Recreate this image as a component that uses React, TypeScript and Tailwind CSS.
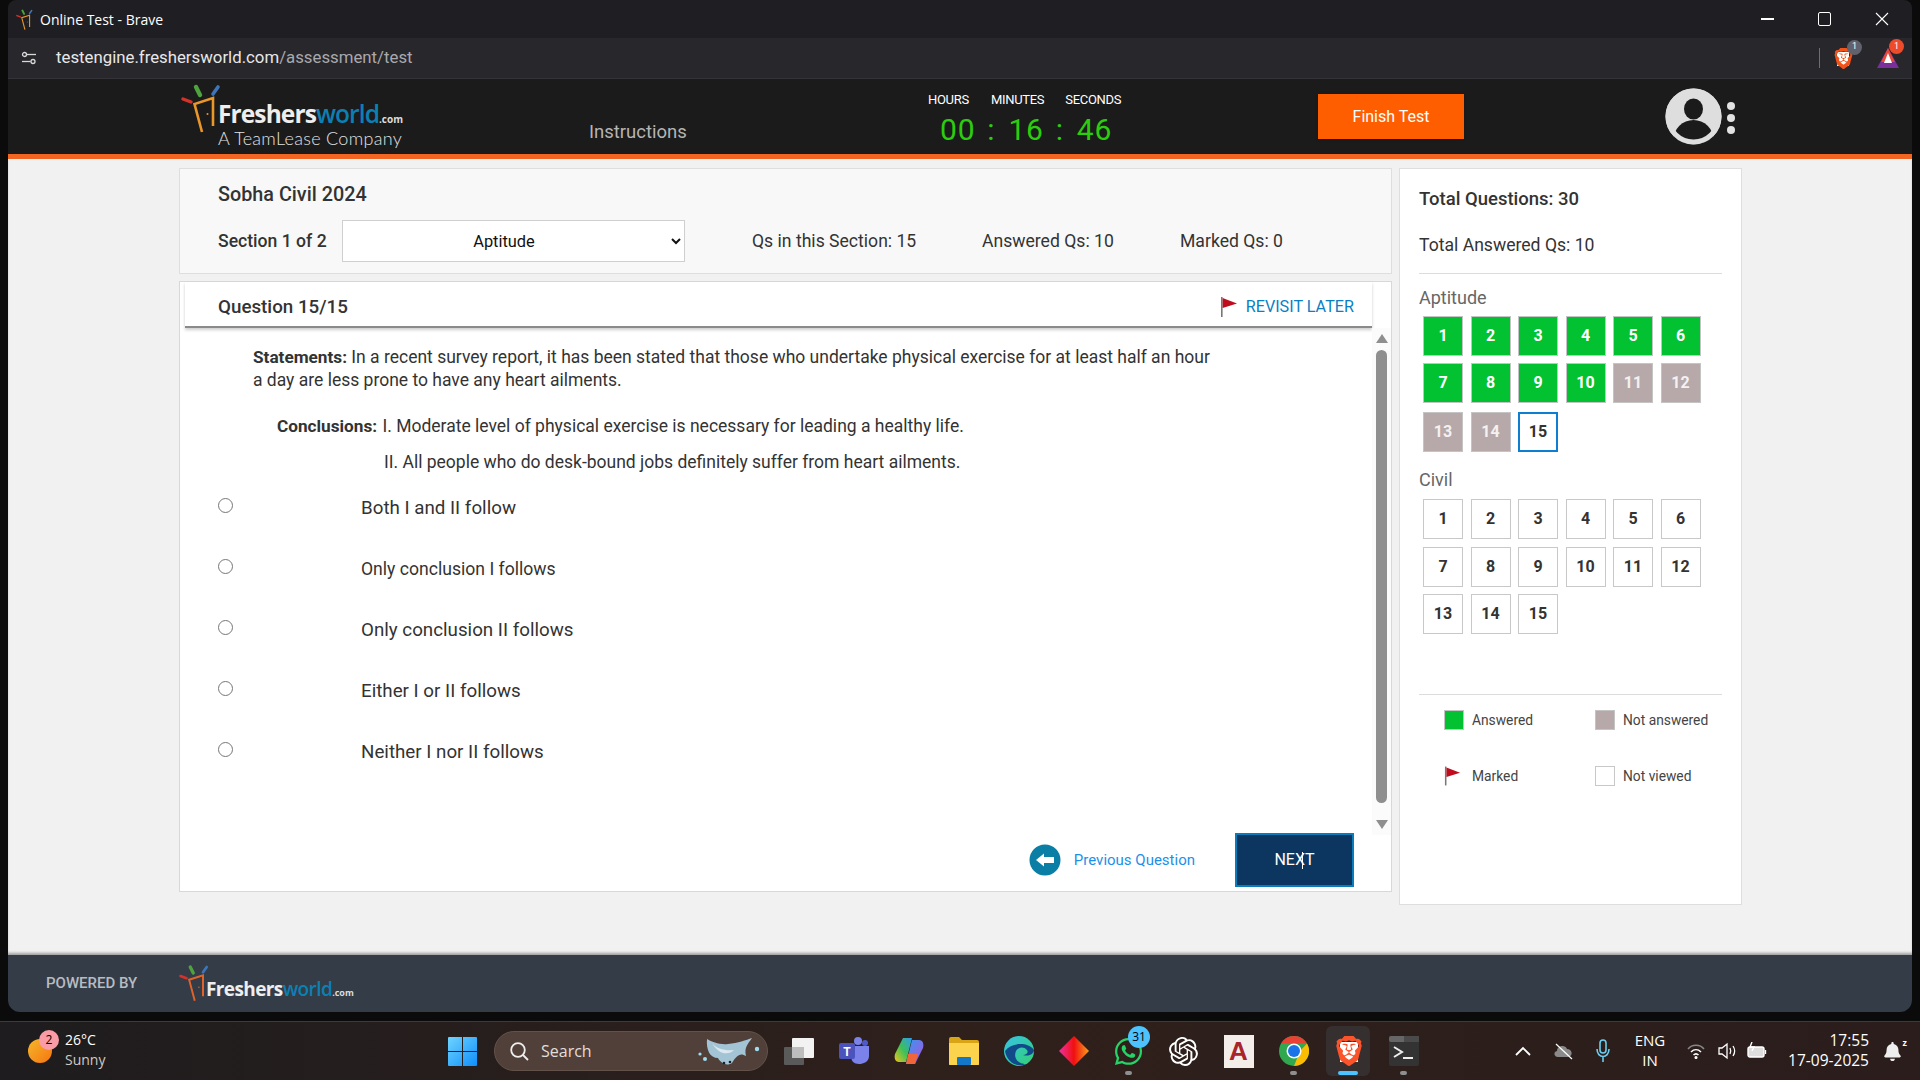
import React from "react";
import { SiOpenai, SiBrave } from "react-icons/si";
import { FaWhatsapp, FaBell } from "react-icons/fa";

const F = { fontFamily: "Roboto, sans-serif" };

function Door({ w = 40, h = 52, door = "#e9962a" }: { w?: number; h?: number; door?: string }) {
  return (
    <svg width={w} height={h} viewBox="10 5 40 52" fill="none">
      <path d="M31 56 L23.5 28 L42 22 L42 50" stroke={door} strokeWidth="2.6" />
      <circle cx="36.5" cy="38" r="1" fill={door} />
      <path d="M12 23 L20 26" stroke="#d5332a" strokeWidth="3.4" strokeLinecap="round" />
      <path d="M25 11 L29 19" stroke="#4fa33f" strokeWidth="4.4" strokeLinecap="round" />
      <path d="M47 11 L42 18" stroke="#3d75b8" strokeWidth="3.6" strokeLinecap="round" />
    </svg>
  );
}

function Flag({ w = 18, h = 20 }: { w?: number; h?: number }) {
  return (
    <svg width={w} height={h} viewBox="0 0 18 20">
      <rect x="1" y="0" width="1.6" height="20" fill="#777" />
      <path d="M2.6 1 L17 6.5 L2.6 11 Z" fill="#c00d1e" />
    </svg>
  );
}

function QBox({ n, kind, shift }: { n: number; kind: "g" | "b" | "w" | "c"; shift?: boolean }) {
  const cls =
    kind === "g"
      ? "bg-[#02c232] text-white border-[#c4c4c4]"
      : kind === "b"
        ? "bg-[#b7a9a9] text-[#f4f1f1] border-[#c4c4c4]"
        : kind === "c"
          ? "bg-white text-[#333] border-[#0e7fd0]"
          : "bg-white text-[#333] border-[#c8c8c8]";
  return (
    <div className={`w-10 h-10 flex items-center justify-center text-[16px] font-bold ${kind === "c" ? "border-2" : "border"} ${cls} ${shift ? "mt-[2px]" : ""}`}>
      {n}
    </div>
  );
}

function Cell({ children, dot, active }: { children: React.ReactNode; dot?: boolean; active?: boolean }) {
  return (
    <div className="relative w-[55px] h-[59px] flex items-center justify-center">
      {active && <div className="absolute left-[5px] top-[4px] w-[44px] h-[50px] rounded-md bg-[#35302f]" />}
      <div className="relative">{children}</div>
      {dot && <div className="absolute left-[24px] top-[49px] w-[7px] h-[4px] rounded-sm bg-[#8f8f8f]" />}
      {active && <div className="absolute left-[17px] top-[49px] w-[20px] h-[4px] rounded-sm bg-[#4cc2ff]" />}
    </div>
  );
}

function Option({ text, size = "text-[18.75px]" }: { text: string; size?: string }) {
  return (
    <div className="flex h-[61px]">
      <input type="radio" name="ans" className="ml-[38px] mt-[2px] w-[15px] h-[15px] accent-[#0a7ea4]" />
      <div className={`ml-[128px] mt-[1px] leading-[23px] text-[#333] ${size}`}>{text}</div>
    </div>
  );
}

export default function App() {
  const apt = Array.from({ length: 15 }, (_, i) => i + 1);
  return (
    <div className="w-[1920px] h-[1080px] overflow-hidden bg-[#0b0b0b] flex flex-col" style={F}>
      <div className="h-[1012px] mx-[8px] rounded-b-xl overflow-hidden flex flex-col">
        {/* title bar */}
        <div className="h-[38px] bg-[#1f1f23] flex items-center rounded-t-lg">
          <div className="ml-[4px] w-[24px] flex justify-center">
            <Door w={17} h={22} />
          </div>
          <div className="ml-[4px] text-[14px] text-white" style={{ fontFamily: '"Open Sans", sans-serif' }}>Online Test - Brave</div>
          <div className="ml-auto flex items-center mr-[23px] gap-[44px] text-white">
            <div className="w-[13px] h-[1.5px] bg-white" />
            <div className="w-[13px] h-[14px] border border-white rounded-[2px]" />
            <svg width="14" height="14" viewBox="0 0 14 14" stroke="white" strokeWidth="1.1"><path d="M1 1 L13 13 M13 1 L1 13" /></svg>
          </div>
        </div>
        {/* address bar */}
        <div className="h-[41px] bg-[#27272c] border-b border-[#333338] flex items-center">
          <svg className="ml-[13px]" width="16" height="14" viewBox="0 0 16 14" fill="none" stroke="#d8d8d8" strokeWidth="1.3">
            <circle cx="3.5" cy="3.5" r="2" /><path d="M6 3.5 H15" /><circle cx="12" cy="10.5" r="2" /><path d="M1 10.5 H9.5" />
          </svg>
          <div className="ml-[19px] text-[16.8px] text-[#e8e8e8]">
            testengine.freshersworld.com<span className="text-[#a9a9ad]">/assessment/test</span>
          </div>
          <div className="ml-auto flex items-center mr-[13px]">
            <div className="w-px h-[20px] bg-[#6e6e72] mr-[13px]" />
            <div className="relative mr-[23px]">
              <div className="absolute left-[4px] top-[4px] w-[12px] h-[14px] bg-white" />
              <SiBrave className="relative" size={21} color="#f0531c" />
              <div className="absolute -right-[8px] -top-[8px] w-[15px] h-[15px] rounded-full bg-[#62626e] text-white text-[9px] flex items-center justify-center">1</div>
            </div>
            <div className="relative">
              <svg width="22" height="20" viewBox="0 0 22 20"><path d="M11 0 L22 20 H0 Z" fill="#7a2f9a" /><path d="M11 0 L18 14 H4 Z" fill="#e8473a" /><path d="M11 5 L15 15 H7 Z" fill="#fff" /></svg>
              <div className="absolute -right-[5px] -top-[9px] w-[15px] h-[15px] rounded-full bg-[#ee4b2b] text-white text-[9px] flex items-center justify-center">1</div>
            </div>
          </div>
        </div>
        {/* site header */}
        <div className="h-[75px] bg-[#1b1b1b] flex shrink-0">
          <div className="w-[173px] shrink-0" />
          <div className="w-[408px] shrink-0 flex">
            <div className="pt-[2px] shrink-0"><Door /></div>
            <div className="ml-[-3px] pt-[21px]">
              <div className="text-[24.5px] leading-[28px] font-bold whitespace-nowrap text-[#eee]" style={{ fontFamily: '"Open Sans", sans-serif', letterSpacing: "-0.9px" }}>
                Freshers<span className="text-[#0d7fb3] font-semibold">world</span>
                <span className="text-[10px] text-[#ddd] tracking-normal">.com</span>
              </div>
              <div className="mt-[-7px] text-[18px] leading-[24px] text-[#e2e2e2] whitespace-nowrap" style={{ fontFamily: "Lato, sans-serif", fontWeight: 300, letterSpacing: "0.3px" }}>A TeamLease Company</div>
            </div>
          </div>
          <div className="w-[339px] shrink-0 pt-[40px] text-[18.5px] leading-[26px] text-[#b5b5b5]">Instructions</div>
          <div className="w-[390px] shrink-0 pt-[13px]">
            <div className="flex text-[13px] leading-[16px] text-white w-[230px]" style={{ letterSpacing: "-0.3px" }}>
              <span>HOURS</span>
              <span className="ml-[22px]">MINUTES</span>
              <span className="ml-[21px]">SECONDS</span>
            </div>
            <div className="mt-[4px] ml-[12px] text-[30px] leading-[35px] text-[#2ccd0e] whitespace-nowrap" style={{ letterSpacing: "0.8px" }}>
              00<span className="ml-[12px]">:</span><span className="ml-[13px]">16</span><span className="ml-[12px]">:</span><span className="ml-[13px]">46</span>
            </div>
          </div>
          <div className="w-[146px] h-[45px] mt-[15px] shrink-0 bg-[#ff5e00] text-white text-[16px] flex items-center justify-center shadow-sm">Finish Test</div>
          <div className="ml-[201px] mt-[9px] shrink-0 flex">
            <svg width="57" height="57" viewBox="0 0 57 57">
              <defs><clipPath id="av"><circle cx="28.5" cy="28.5" r="28" /></clipPath></defs>
              <circle cx="28.5" cy="28.5" r="28" fill="#dedede" />
              <ellipse cx="28.5" cy="21" rx="9.5" ry="10.5" fill="#1b1b1b" />
              <circle cx="28.5" cy="52" r="20" fill="#1b1b1b" stroke="#dedede" strokeWidth="0" clipPath="url(#av)" />
              <circle cx="28.5" cy="28.5" r="25.5" fill="none" stroke="#dedede" strokeWidth="5" />
            </svg>
            <div className="ml-[5px] mt-[14px] flex flex-col gap-[4px]">
              <div className="w-[8px] h-[8px] rounded-full bg-[#e2e2e2]" />
              <div className="w-[8px] h-[8px] rounded-full bg-[#e2e2e2]" />
              <div className="w-[8px] h-[8px] rounded-full bg-[#e2e2e2]" />
            </div>
          </div>
        </div>
        <div className="h-[5px] bg-[#f26522] shrink-0" />
        {/* main */}
        <div className="h-[796px] bg-[#f1f1f1] shrink-0 pl-[171px] pt-[9px] flex gap-[7px] shadow-[inset_0_-3px_3px_-1px_rgba(0,0,0,0.35)]">
          <div className="w-[1213px] flex flex-col gap-[7px]">
            <div className="h-[106px] bg-[#f8f8f8] border border-[#dedede] pl-[38px] pt-[13px]">
              <div className="text-[19.8px] leading-[26px] font-medium text-[#333]">Sobha Civil 2024</div>
              <div className="mt-[12px] flex items-center h-[42px] text-[17.6px] text-[#333]">
                <div className="w-[124px] font-medium">Section 1 of 2</div>
                <select className="w-[343px] h-[42px] bg-white border border-[#cfcfcf] text-[#111] text-[16.4px] text-center pr-[7px]" defaultValue="Aptitude" style={F}>
                  <option>Aptitude</option>
                  <option>Civil</option>
                </select>
                <div className="ml-[67px] w-[230px]">Qs in this Section: 15</div>
                <div className="w-[198px]">Answered Qs: 10</div>
                <div>Marked Qs: 0</div>
              </div>
            </div>
            <div className="h-[611px] bg-white border border-[#d8d8d8] flex flex-col">
              <div className="h-[46px] mx-[5px] flex items-center pt-[6px] pl-[33px] pr-[18px] border-b-2 border-[#8a8a8a] shadow-[0_2px_3px_rgba(0,0,0,0.2)] shrink-0 w-[1187px]">
                <div className="text-[18.8px] font-medium text-[#333]">Question 15/15</div>
                <div className="ml-auto flex items-center gap-[8px] text-[16.2px] text-[#0a7fc4]">
                  <Flag />
                  <span>REVISIT LATER</span>
                </div>
              </div>
              <div className="flex flex-1 min-h-0">
                <div className="w-[1192px] shrink-0 flex flex-col">
                  <div className="pl-[73px] pt-[18px] text-[17.5px] leading-[23px] text-[#333] w-[1038px]">
                    <div><b className="font-bold text-[17.2px]">Statements:</b> In a recent survey report, it has been stated that those who undertake physical exercise for at least half an hour a day are less prone to have any heart ailments.</div>
                    <div className="mt-[23px] pl-[24px]"><b className="font-bold text-[17.2px]">Conclusions:</b> <span className="ml-[1px]">I. Moderate level of physical exercise is necessary for leading a healthy life.</span></div>
                    <div className="mt-[13px] pl-[131px]">II. All people who do desk-bound jobs definitely suffer from heart ailments.</div>
                  </div>
                  <div className="mt-[22px]">
                    <Option text="Both I and II follow" />
                    <Option text="Only conclusion I follows" size="text-[17.6px]" />
                    <Option text="Only conclusion II follows" />
                    <Option text="Either I or II follows" />
                    <Option text="Neither I nor II follows" />
                  </div>
                  <div className="mt-auto mb-[4px] flex items-center justify-end pr-[18px]">
                    <svg width="32" height="32" viewBox="0 0 32 32"><circle cx="16" cy="16" r="15.5" fill="#0a7ea4" /><path d="M7 16 L15 9.5 V13 H25 V19 H15 V22.5 Z" fill="#fff" /></svg>
                    <span className="ml-[13px] text-[15px] text-[#1e90e8]">Previous Question</span>
                    <div className="ml-[40px] w-[119px] h-[54px] bg-[#0c3660] border-2 border-[#0a7cbb] text-white text-[16px] flex items-center justify-center relative">
                      NEXT
                      <div className="absolute left-[65px] top-[17px] w-px h-[17px] bg-white" />
                    </div>
                  </div>
                </div>
                <div className="w-[19px] h-[507px] bg-[#fbfbfb] flex flex-col items-center pt-[6px] shrink-0">
                  <svg width="12" height="9" viewBox="0 0 12 9"><path d="M6 0 L12 9 H0 Z" fill="#8f8f8f" /></svg>
                  <div className="mt-[7px] w-[11px] h-[453px] rounded-full bg-[#8f8f8f]" />
                  <svg className="mt-[17px]" width="12" height="9" viewBox="0 0 12 9"><path d="M0 0 H12 L6 9 Z" fill="#8f8f8f" /></svg>
                </div>
              </div>
            </div>
          </div>
          <div className="w-[343px] h-[737px] bg-white border border-[#dedede] px-[19px] pt-[17px] shrink-0">
            <div className="text-[18.5px] leading-[26px] font-medium text-[#333]">Total Questions: 30</div>
            <div className="mt-[20px] text-[17.6px] leading-[26px] text-[#333]">Total Answered Qs: 10</div>
            <div className="mt-[15px] h-px bg-[#dcdcdc]" />
            <div className="mt-[12px] text-[18px] leading-[24px] text-[#666]">Aptitude</div>
            <div className="mt-[6px] ml-[4px] grid grid-cols-[repeat(6,40px)] gap-x-[7.5px] gap-y-[7px]">
              {apt.map((n) => (
                <QBox key={n} n={n} kind={n <= 10 ? "g" : n < 15 ? "b" : "c"} shift={n > 12} />
              ))}
            </div>
            <div className="mt-[16px] text-[18px] leading-[24px] text-[#666]">Civil</div>
            <div className="mt-[7px] ml-[4px] grid grid-cols-[repeat(6,40px)] gap-x-[7.5px] gap-y-[7.5px]">
              {apt.map((n) => (
                <QBox key={n} n={n} kind="w" />
              ))}
            </div>
            <div className="mt-[60px] h-px bg-[#dcdcdc]" />
            <div className="mt-[15px] ml-[25px] grid grid-cols-[151px_1fr] gap-y-[36px] text-[13.8px] leading-[20px] text-[#444]">
              <div className="flex items-center gap-[8px]"><div className="w-5 h-5 bg-[#02c232] border border-[#c4c4c4]" />Answered</div>
              <div className="flex items-center gap-[8px]"><div className="w-5 h-5 bg-[#b7a9a9] border border-[#c4c4c4]" />Not answered</div>
              <div className="flex items-center gap-[11px]"><Flag w={17} h={20} />Marked</div>
              <div className="flex items-center gap-[8px]"><div className="w-5 h-5 bg-white border border-[#c8c8c8]" />Not viewed</div>
            </div>
          </div>
        </div>
        {/* footer */}
        <div className="flex-1 bg-[#343c48] flex items-center pl-[38px]">
          <div className="text-[15px] font-medium text-[#b8bcc2] w-[133px]">POWERED BY</div>
          <div className="flex items-center mt-[-3px]">
            <Door w={30} h={40} door="#e0632a" />
            <div className="ml-[-3px] mt-[14px] text-[19px] font-bold text-[#eee] whitespace-nowrap" style={{ fontFamily: '"Open Sans", sans-serif', letterSpacing: "-0.6px" }}>
              Freshers<span className="text-[#0d7fb3] font-semibold">world</span><span className="text-[9px] text-[#ddd] tracking-normal">.com</span>
            </div>
          </div>
        </div>
      </div>
      <div className="h-[9px] shrink-0" />
      {/* taskbar */}
      <div className="h-[59px] shrink-0 border-t border-[#3d3a39] bg-gradient-to-r from-[#1e1c1e] via-[#2f201b] to-[#2a1d1b] flex items-center text-white" style={{ fontFamily: '"Open Sans", sans-serif' }}>
        <div className="w-[435px] shrink-0 flex items-center pl-[28px]">
          <div className="relative w-[24px] h-[24px] rounded-full bg-gradient-to-br from-[#f4b62a] to-[#f5740f]">
            <div className="absolute -right-[7px] -top-[9px] w-[20px] h-[20px] rounded-full bg-[#f99ca6] text-black text-[12px] flex items-center justify-center">2</div>
          </div>
          <div className="ml-[13px] text-[14px] leading-[20px] mt-[-2px]">
            <div>26°C</div>
            <div className="text-[#cfcac8]">Sunny</div>
          </div>
        </div>
        <Cell>
          <svg width="29" height="29" viewBox="0 0 29 29">
            <defs><linearGradient id="win" x1="0" y1="0" x2="1" y2="1"><stop offset="0" stopColor="#6fd3ff" /><stop offset="1" stopColor="#0f8ffb" /></linearGradient></defs>
            <path d="M0 1 a1 1 0 0 1 1-1 H14 V14 H0 Z M15 0 H28 a1 1 0 0 1 1 1 V14 H15 Z M0 15 H14 V29 H1 a1 1 0 0 1-1-1 Z M15 15 H29 V28 a1 1 0 0 1-1 1 H15 Z" fill="url(#win)" />
          </svg>
        </Cell>
        <div className="ml-[4px] mr-[3px] w-[274px] h-[40px] rounded-full bg-[#51403a] border border-[#635249] flex items-center pl-[14px] relative shrink-0">
          <svg width="20" height="20" viewBox="0 0 20 20" fill="none" stroke="#eee" strokeWidth="1.8"><circle cx="9" cy="9" r="6.8" /><path d="M14 14 L19 19" /></svg>
          <span className="ml-[12px] text-[16px] text-[#e2dedb]">Search</span>
          <svg className="absolute right-[5px] top-[4px]" width="64" height="32" viewBox="0 0 64 32">
            <path d="M9 3 C14 6 22 9 30 8 C40 7 48 4 54 2 C50 8 46 11 48 20 C42 16 38 20 34 27 C28 31 22 26 20 22 C12 22 8 14 9 3 Z" fill="#a3c4d4" />
            <path d="M14 7 C18 13 28 15 36 14 C30 20 20 18 14 7 Z" fill="#dbe9ef" />
            <circle cx="2" cy="18" r="1.6" fill="#9fdcf0" /><circle cx="59" cy="13" r="2.2" fill="#9fdcf0" /><circle cx="7" cy="23" r="2" fill="#9fdcf0" />
            <circle cx="26" cy="27" r="1.3" fill="#123" /><circle cx="32" cy="26" r="1.3" fill="#123" />
          </svg>
        </div>
        <Cell>
          <svg width="30" height="27" viewBox="0 0 30 27"><rect x="0" y="9" width="20" height="18" rx="1" fill="#5a5a5a" /><rect x="8" y="0" width="22" height="20" rx="1" fill="#f2f2f2" /><rect x="8" y="9" width="12" height="11" fill="#bdbdbd" /></svg>
        </Cell>
        <Cell>
          <svg width="30" height="30" viewBox="0 0 30 30"><circle cx="19" cy="5" r="4" fill="#7b83eb" /><circle cx="26" cy="7" r="3" fill="#5059c9" /><path d="M12 10 H30 V20 C30 26 24 28 20 28 C15 28 12 25 12 20 Z" fill="#7b83eb" /><rect x="0" y="7" width="16" height="16" rx="2" fill="#4b53bc" /><text x="8" y="20" fontSize="12" fontWeight="700" textAnchor="middle" fill="#fff" fontFamily="Roboto">T</text></svg>
        </Cell>
        <Cell>
          <svg width="30" height="30" viewBox="0 0 30 30">
            <defs><linearGradient id="cp" x1="0" y1="0" x2="1" y2="1"><stop offset="0" stopColor="#2f9bf0" /><stop offset="1" stopColor="#b34fe0" /></linearGradient><linearGradient id="cp2" x1="0" y1="1" x2="1" y2="0"><stop offset="0" stopColor="#f0c419" /><stop offset="0.5" stopColor="#3cc05a" /><stop offset="1" stopColor="#2f9bf0" /></linearGradient></defs>
            <path d="M9 2 H18 L12 26 H5 C1 26 0 22 1 18 Z" fill="url(#cp2)" />
            <path d="M21 28 H12 L18 4 H25 C29 4 30 8 29 12 Z" fill="url(#cp)" />
            <path d="M12 28 H21 L24 18 H14 Z" fill="#f0663a" />
          </svg>
        </Cell>
        <Cell>
          <svg width="30" height="28" viewBox="0 0 30 28"><path d="M0 2 a2 2 0 0 1 2-2 H10 L13 3 H28 a2 2 0 0 1 2 2 V27 a1 1 0 0 1-1 1 H1 a1 1 0 0 1-1-1 Z" fill="#d9a416" /><path d="M0 6 H30 V27 a1 1 0 0 1-1 1 H1 a1 1 0 0 1-1-1 Z" fill="#fcd34d" /><rect x="8" y="20" width="14" height="8" rx="1" fill="#1478c8" /></svg>
        </Cell>
        <Cell>
          <svg width="30" height="30" viewBox="0 0 30 30">
            <defs><linearGradient id="ed" x1="0" y1="0" x2="1" y2="1"><stop offset="0" stopColor="#36c3e8" /><stop offset="1" stopColor="#32d06e" /></linearGradient></defs>
            <circle cx="15" cy="15" r="15" fill="url(#ed)" />
            <path d="M1 15 C3 27 14 32 22 28 C14 28 9 22 12 15 C14 11 20 10 23 14 C25 17 22 19 19 19 C26 21 30 17 30 14 C24 6 8 6 1 15 Z" fill="#114a8b" />
          </svg>
        </Cell>
        <Cell>
          <svg width="30" height="30" viewBox="0 0 30 30">
            <defs><linearGradient id="dm" x1="0" y1="0" x2="1" y2="0"><stop offset="0" stopColor="#f12fa0" /><stop offset="0.5" stopColor="#f01010" /><stop offset="1" stopColor="#f9a01c" /></linearGradient></defs>
            <path d="M15 0 L30 15 L15 30 L0 15 Z" fill="url(#dm)" />
          </svg>
        </Cell>
        <Cell dot>
          <div className="relative">
            <FaWhatsapp size={31} color="#25d366" />
            <div className="absolute -right-[6px] -top-[10px] w-[22px] h-[22px] rounded-full bg-[#4cc2ff] text-black text-[12px] flex items-center justify-center">31</div>
          </div>
        </Cell>
        <Cell>
          <SiOpenai size={29} color="#fff" />
        </Cell>
        <Cell>
          <div className="w-[30px] h-[33px] bg-[#f3eeea] flex items-center justify-center text-[26px] font-bold text-[#a8252c]" style={{ fontFamily: '"Liberation Sans", sans-serif' }}>A</div>
        </Cell>
        <Cell dot>
          <svg width="30" height="30" viewBox="0 0 30 30">
            <circle cx="15" cy="15" r="15" fill="#2fa84f" />
            <path d="M15 0 A15 15 0 0 1 28 7.5 H15 Z M2 7.5 A15 15 0 0 1 15 0 L15 7.5 Z" fill="#e94235" />
            <path d="M28 7.5 A15 15 0 0 1 15 30 L21 15 Z" fill="#fbbc04" />
            <circle cx="15" cy="15" r="7.5" fill="#fff" /><circle cx="15" cy="15" r="6" fill="#1a73e8" />
          </svg>
        </Cell>
        <Cell active>
          <div className="relative">
            <div className="absolute left-[6px] top-[6px] w-[18px] h-[20px] bg-white" />
            <SiBrave className="relative" size={30} color="#fb542b" />
          </div>
        </Cell>
        <Cell dot>
          <svg width="30" height="30" viewBox="0 0 30 30"><rect width="30" height="30" rx="2" fill="#333" /><rect width="30" height="6" rx="2" fill="#666" /><rect x="15" y="0" width="15" height="6" fill="#4a4a4a" /><path d="M5 11 L13 16 L5 21" stroke="#eee" strokeWidth="2" fill="none" /><rect x="14" y="21" width="10" height="2" fill="#eee" /></svg>
        </Cell>
        <div className="ml-[84px] w-[16px] flex justify-center">
          <svg width="16" height="10" viewBox="0 0 16 10" fill="none" stroke="#fff" strokeWidth="1.8"><path d="M1 9 L8 2 L15 9" /></svg>
        </div>
        <div className="ml-[22px]">
          <svg width="22" height="20" viewBox="0 0 22 20"><path d="M5 16 C1 16 0 11 4 10 C4 5 12 3 14 8 C19 8 21 15 15 16 Z" fill="#8a8a8a" /><path d="M3 3 L19 18" stroke="#fff" strokeWidth="1.2" /></svg>
        </div>
        <div className="ml-[20px]">
          <svg width="16" height="24" viewBox="0 0 16 24" fill="none" stroke="#6ccdf0" strokeWidth="1.6"><rect x="5" y="1" width="6" height="13" rx="3" /><path d="M2 10 C2 20 14 20 14 10 M8 18 V23" /></svg>
        </div>
        <div className="ml-[19px] w-[40px] text-center text-[15px] leading-[20px] mt-[-2px]">ENG<br />IN</div>
        <div className="ml-[17px]">
          <svg width="18" height="16" viewBox="0 0 18 16" fill="none" stroke="#fff" strokeWidth="1.5"><path d="M1 6 C5 1 13 1 17 6" stroke="#888" /><path d="M4 9 C7 6 11 6 14 9" /><path d="M6.5 12 C8 10.5 10 10.5 11.5 12" /><circle cx="9" cy="14.5" r="0.8" fill="#fff" /></svg>
        </div>
        <div className="ml-[13px]">
          <svg width="20" height="18" viewBox="0 0 20 18" fill="none" stroke="#fff" strokeWidth="1.3"><path d="M1 6 H4 L9 2 V16 L4 12 H1 Z" /><path d="M12 6 C13 8 13 10 12 12 M15 4 C17 7 17 11 15 14" /></svg>
        </div>
        <div className="ml-[9px]">
          <svg width="20" height="18" viewBox="0 0 20 18" fill="none" stroke="#fff" strokeWidth="1.4"><rect x="1" y="5" width="16" height="10" rx="2" fill="#ddd" /><path d="M18.5 8 V12" /><path d="M5 0 L3 5 H7 L5 9" stroke="#fff" /></svg>
        </div>
        <div className="ml-[20px] w-[82px] text-right text-[15.5px] leading-[20px] whitespace-nowrap mt-[-2px]">17:55<br />17-09-2025</div>
        <div className="ml-[14px] relative">
          <FaBell size={19} color="#eee" />
          <span className="absolute -right-[5px] -top-[6px] text-[9px] font-bold">z</span>
        </div>
      </div>
    </div>
  );
}
